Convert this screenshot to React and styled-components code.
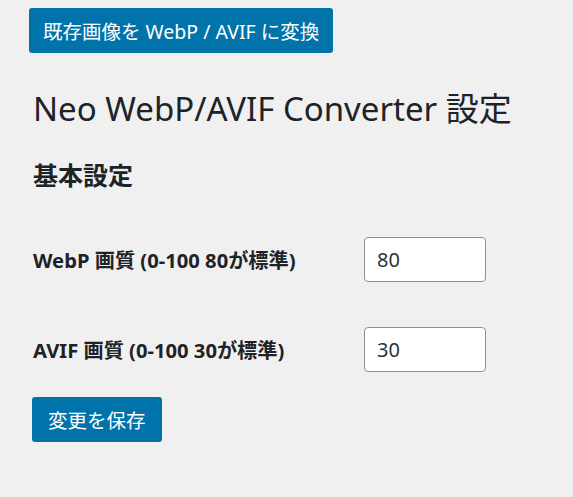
import React from "react";
import styled, { createGlobalStyle } from "styled-components";

const GlobalStyle = createGlobalStyle`
  html, body {
    margin: 0;
    padding: 0;
    background: #f0f0f1;
  }
  body {
    font-family: "Noto Sans", "Noto Sans CJK JP", sans-serif;
    color: #1d2327;
  }
`;

const Wrap = styled.div`
  padding: 8px 29px;
  display: flex;
  flex-direction: column;
  align-items: flex-start;
`;

const PrimaryButton = styled.button`
  height: 45px;
  margin-left: ${(p) => p.$indent || 0}px;
  padding: 0 ${(p) => p.$pad || 16}px;
  background: #0073aa;
  color: #fff;
  border: none;
  border-radius: 3px;
  font-family: inherit;
  font-size: 19.5px;
  cursor: pointer;
`;

const Title = styled.h1`
  margin: 35px 0 0 4px;
  font-size: 33px;
  font-weight: 400;
  line-height: 1.3;
`;

const Section = styled.h2`
  margin: 29px 0 0 4px;
  font-size: 25px;
  font-weight: 700;
  line-height: 1.25;
`;

const Form = styled.form`
  display: flex;
  flex-direction: column;
  align-items: flex-start;
  gap: 45px;
  margin-top: 46px;
`;

const Row = styled.div`
  display: grid;
  grid-template-columns: 331px 122px;
  align-items: center;
  margin-left: 4px;
`;

const Label = styled.label`
  font-size: 20.2px;
  font-weight: 700;
`;

const NumberInput = styled.input`
  box-sizing: border-box;
  width: 122px;
  height: 45px;
  padding: 0 12px;
  border: 1px solid #8c8f94;
  border-radius: 4px;
  background: #fff;
  color: #2c3338;
  font-family: inherit;
  font-size: 20px;
  outline: none;
`;

const Actions = styled.div`
  margin-top: -20px;
`;

export default function App() {
  return (
    <Wrap>
      <GlobalStyle />
      <PrimaryButton type="button" $pad={14}>既存画像を WebP / AVIF に変換</PrimaryButton>
      <Title>Neo WebP/AVIF Converter 設定</Title>
      <Section>基本設定</Section>
      <Form onSubmit={(e) => e.preventDefault()}>
        <Row>
          <Label>WebP 画質 (0-100 80が標準)</Label>
          <NumberInput type="text" defaultValue="80" />
        </Row>
        <Row>
          <Label>AVIF 画質 (0-100 30が標準)</Label>
          <NumberInput type="text" defaultValue="30" />
        </Row>
        <Actions>
          <PrimaryButton $indent={3} type="submit">変更を保存</PrimaryButton>
        </Actions>
      </Form>
    </Wrap>
  );
}
